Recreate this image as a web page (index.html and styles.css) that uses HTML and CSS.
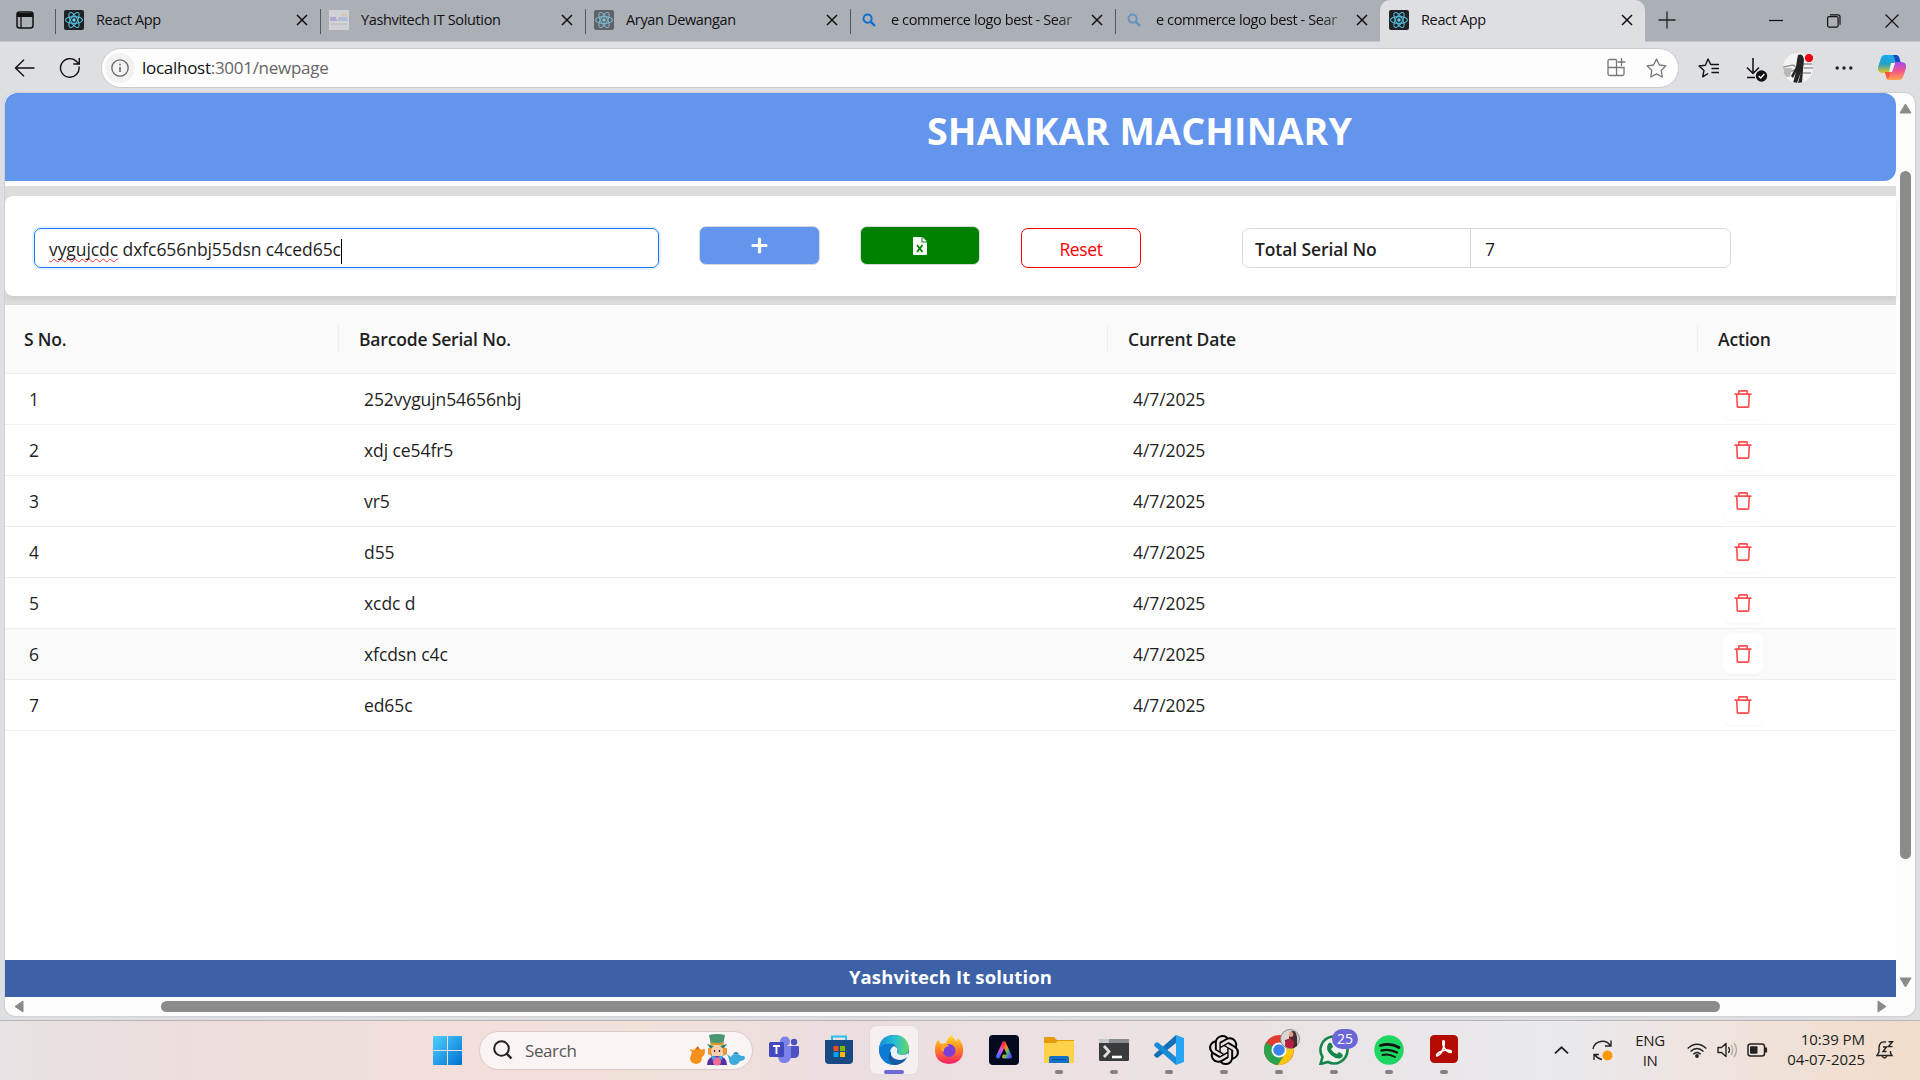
FILE: index.html
```html
<!DOCTYPE html>
<html lang="en">
<head>
<meta charset="utf-8">
<title>React App</title>
<link rel="stylesheet" href="styles.css">
</head>
<body>
<svg class="defs" width="0" height="0">
  <symbol id="react" viewBox="0 0 20 20">
    <rect width="20" height="20" rx="2" fill="#202225"/>
    <g fill="none" stroke="#55bcd8" stroke-width="1.1">
      <ellipse cx="10" cy="10" rx="8.5" ry="3.4"/>
      <ellipse cx="10" cy="10" rx="8.5" ry="3.4" transform="rotate(60 10 10)"/>
      <ellipse cx="10" cy="10" rx="8.5" ry="3.4" transform="rotate(120 10 10)"/>
    </g>
    <circle cx="10" cy="10" r="1.7" fill="#6ad5f0"/>
  </symbol>
  <symbol id="close" viewBox="0 0 12 12"><path d="M1 1 11 11M11 1 1 11" fill="none" stroke="#111" stroke-width="1.5"/></symbol>
  <symbol id="lens" viewBox="0 0 14 14"><circle cx="5.6" cy="5.6" r="4.1" fill="none" stroke="#0f6fd0" stroke-width="2"/><path d="M8.8 8.8 13 13" stroke="#0f6fd0" stroke-width="2.4"/></symbol>
  <symbol id="trash" viewBox="64 64 896 896"><path fill="#ff4d4f" d="M360 184h-8c4.400 0 8-3.600 8-8v8h304v-8c0 4.400 3.600 8 8 8h-8v72h72v-80c0-35.300-28.700-64-64-64H352c-35.300 0-64 28.700-64 64v80h72v-72zm504 72H160c-17.700 0-32 14.300-32 32v32c0 4.400 3.600 8 8 8h60.400l24.700 523c1.600 34.100 29.800 61 63.900 61h454c34.200 0 62.300-26.800 63.900-61l24.700-523H888c4.400 0 8-3.600 8-8v-32c0-17.700-14.300-32-32-32zM731.300 840H292.700l-24.200-512h487l-24.200 512z"/></symbol>
</svg>

<header class="tabbar">
  <div class="tab-actions"><svg width="18" height="18" viewBox="0 0 18 18"><rect x="1" y="1" width="16" height="16" rx="2.500" fill="none" stroke="#111" stroke-width="1.500"/><path d="M1 2h16v4H1z" fill="#111"/><path d="M5 5v12" stroke="#111" stroke-width="1.300"/></svg></div>
  <div class="tab"><svg class="fav"><use href="#react"/></svg><span class="label">React App</span><svg class="x"><use href="#close"/></svg></div>
  <div class="tab"><svg class="fav" viewBox="0 0 20 20"><rect width="20" height="20" fill="#d0d2d5"/><path d="M1 10h7M1 8h6" stroke="#a79bd0" stroke-width="1.500"/><path d="M9 10h10M9 8h9" stroke="#a5b8d8" stroke-width="1.500"/><path d="M13 6l3-2 3 3" stroke="#e4bb82" fill="none"/><path d="M2 14h16" stroke="#b2b5b9"/></svg><span class="label">Yashvitech IT Solution</span><svg class="x"><use href="#close"/></svg></div>
  <div class="tab"><svg class="fav dim"><use href="#react"/></svg><span class="label">Aryan Dewangan</span><svg class="x"><use href="#close"/></svg></div>
  <div class="tab"><svg class="fav lens"><use href="#lens"/></svg><span class="label">e commerce logo best - Sear</span><svg class="x"><use href="#close"/></svg></div>
  <div class="tab"><svg class="fav lens faint"><use href="#lens"/></svg><span class="label">e commerce logo best - Sear</span><svg class="x"><use href="#close"/></svg></div>
  <div class="tab active"><svg class="fav"><use href="#react"/></svg><span class="label">React App</span><svg class="x"><use href="#close"/></svg></div>
  <svg class="newtab" width="18" height="18" viewBox="0 0 18 18"><path d="M9 .5v17M.5 9h17" stroke="#222" stroke-width="1.300"/></svg>
  <div class="winctl">
    <svg width="14" height="14" viewBox="0 0 14 14"><path d="M0 6.500h14" stroke="#111" stroke-width="1.200"/></svg>
    <svg width="14" height="14" viewBox="0 0 14 14"><rect x=".6" y="2.600" width="10.500" height="10.500" rx="1.500" fill="none" stroke="#111" stroke-width="1.200"/><path d="M3 .8h8q2 0 2 2v8" fill="none" stroke="#111" stroke-width="1.200"/></svg>
    <svg width="14" height="14" viewBox="0 0 14 14"><path d="M.5.5l13 13M13.500.5l-13 13" stroke="#111" stroke-width="1.100"/></svg>
  </div>
</header>

<nav class="toolbar">
  <svg class="back" width="21" height="18" viewBox="0 0 21 18"><path d="M20.500 9H1.500M10 .8 1.500 9l8.500 8.200" fill="none" stroke="#111" stroke-width="1.400"/></svg>
  <svg class="reload" width="22" height="22" viewBox="0 0 22 22"><path d="M20 9.500A9.300 9.300 0 1 1 17.600 4.600L20 7M20.300 1v6h-6" fill="none" stroke="#111" stroke-width="1.400"/></svg>
  <div class="address">
    <span class="info"><svg width="18" height="18" viewBox="0 0 18 18"><circle cx="9" cy="9" r="8.200" fill="none" stroke="#666" stroke-width="1.300"/><path d="M9 8v5M9 4.800v1.700" stroke="#666" stroke-width="1.500"/></svg></span>
    <span class="url"><b>localhost</b>:3001/newpage</span>
    <svg class="apps" width="19" height="19" viewBox="0 0 19 19"><path d="M9.500 1.500h-7q-1.500 0-1.500 1.500v13q0 1.500 1.500 1.500h13q1.500 0 1.500-1.500V9.500H1M9.500 1.500V17.500M14.500 0v8M10.700 4h7.600" fill="none" stroke="#777" stroke-width="1.300"/></svg>
    <svg width="21" height="20" viewBox="0 0 21 20"><path d="M10.500 1l2.900 6 6.500.9-4.700 4.600 1.100 6.500-5.800-3.100L4.700 19l1.100-6.500L1.100 7.900 7.600 7z" fill="none" stroke="#777" stroke-width="1.300" stroke-linejoin="round"/></svg>
  </div>
  <div class="tools">
    <svg width="22" height="20" viewBox="0 0 22 20"><path d="M10 15.500 4.700 18.800 6 12.400 1.100 8l6.300-.8L10 1l2.700 5.500H21M13.500 10.500H21M13.500 14.500H21" fill="none" stroke="#111" stroke-width="1.400" stroke-linejoin="round"/></svg>
    <svg class="dl" width="22" height="24" viewBox="0 0 22 24"><path d="M7 0v15M1 9.500l6 6 6-6M1 19.500h8" fill="none" stroke="#111" stroke-width="1.500"/><circle cx="15.500" cy="18" r="5.700" fill="#111"/><path d="M12.700 18l2 2 3.600-4" fill="none" stroke="#fff" stroke-width="1.300"/></svg>
    <svg class="me" width="31" height="30" viewBox="0 0 31 30"><clipPath id="r"><circle cx="15" cy="15" r="15"/></clipPath><g clip-path="url(#r)"><rect width="31" height="30" fill="#f3f3f3"/><path d="M0 14l10-2 5 3-6 3-9 2M20 11h10M21 15h9M20 20h8" stroke="#999" stroke-width="1.500" fill="none"/><path d="M0 15h9l-2 9H2z" fill="#b9b9b9"/><path d="M15 2q5-2 6 5l-1 10-1 13h-4l3-11-4 11h-4l3-11-3 6-2-2 5-9 1-7z" fill="#242424"/></g><circle cx="26" cy="5" r="4.600" fill="#e60012" stroke="#e8e8ea"/></svg>
    <svg class="more" width="18" height="4" viewBox="0 0 18 4"><g fill="#222"><circle cx="2.200" cy="2" r="1.700"/><circle cx="9" cy="2" r="1.700"/><circle cx="15.800" cy="2" r="1.700"/></g></svg>
    <svg class="copilot" width="28" height="27" viewBox="0 0 28 27"><defs><linearGradient id="c1" x2="0" y2="1"><stop stop-color="#16a9f5"/><stop offset=".5" stop-color="#20a3c6"/><stop offset="1" stop-color="#f0c21a"/></linearGradient><linearGradient id="c2" x2="0" y2="1"><stop stop-color="#a44df0"/><stop offset=".5" stop-color="#f2548b"/><stop offset="1" stop-color="#ffa34c"/></linearGradient></defs><path d="M7 1h10q3 0 4 4l1 3h-3q-4 0-5 4l-2 7H4q-5-1-4-6L3 4Q4 1 7 1z" fill="url(#c1)"/><path d="M15 1h3q3 0 4 5l.5 2h-5q-1-5-2.500-7z" fill="#1747c4"/><path d="M21 26H11q-3 0-3-4l-1-3h3q4 0 5-4l2-7h7q5 1 4 6l-3 9q-1 3-4 3z" fill="url(#c2)"/><path d="M8 18h5l-3 7q-2-2-3-7z" fill="#f15a3a"/><path d="M13 9h4l-3 9h-3z" fill="#f2f0f5"/></svg>
  </div>
</nav>

<main class="frame">
  <div class="page">
    <div class="banner"><h1>SHANKAR MACHINARY</h1></div>
    <section class="strip">
      <div class="controls">
        <div class="field"><span class="misspelt">vygujcdc</span> dxfc656nbj55dsn c4ced65c<i class="caret"></i></div>
        <button class="btn add"><svg width="17" height="17" viewBox="0 0 17 17"><path d="M8.500 2v13M2 8.500h13" stroke="#fff" stroke-width="3.200" stroke-linecap="round"/></svg></button>
        <button class="btn excel"><svg width="14" height="18" viewBox="0 0 14 18"><path d="M0 1q0-1 1-1h7.500v5.500H14V17q0 1-1 1H1q-1 0-1-1z" fill="#fff"/><path d="M9.500 0 14 4.500H9.500z" fill="#fff"/><path d="M4 8l5.500 7M9.500 8 4 15" stroke="#008000" stroke-width="1.800"/></svg></button>
        <button class="btn reset">Reset</button>
        <div class="total"><span class="total-label">Total Serial No</span><span class="total-value">7</span></div>
      </div>
    </section>
    <section class="table">
      <div class="row head"><div>S No.</div><div>Barcode Serial No.</div><div>Current Date</div><div>Action</div></div>
      <div class="row"><div>1</div><div>252vygujn54656nbj</div><div>4/7/2025</div><div><span class="del"><svg><use href="#trash"/></svg></span></div></div>
      <div class="row"><div>2</div><div>xdj ce54fr5</div><div>4/7/2025</div><div><span class="del"><svg><use href="#trash"/></svg></span></div></div>
      <div class="row"><div>3</div><div>vr5</div><div>4/7/2025</div><div><span class="del"><svg><use href="#trash"/></svg></span></div></div>
      <div class="row"><div>4</div><div>d55</div><div>4/7/2025</div><div><span class="del"><svg><use href="#trash"/></svg></span></div></div>
      <div class="row"><div>5</div><div>xcdc d</div><div>4/7/2025</div><div><span class="del"><svg><use href="#trash"/></svg></span></div></div>
      <div class="row hover"><div>6</div><div>xfcdsn c4c</div><div>4/7/2025</div><div><span class="del"><svg><use href="#trash"/></svg></span></div></div>
      <div class="row"><div>7</div><div>ed65c</div><div>4/7/2025</div><div><span class="del"><svg><use href="#trash"/></svg></span></div></div>
    </section>
    <footer class="foot"><span>Yashvitech It solution</span></footer>
  </div>
  <div class="vscroll">
    <svg width="13" height="11" viewBox="0 0 13 11"><path d="M6.500 1 12 10H1z" fill="#8b8b8b" stroke="#8b8b8b" stroke-linejoin="round"/></svg>
    <i></i>
    <svg width="13" height="11" viewBox="0 0 13 11"><path d="M6.500 10 12 1H1z" fill="#8b8b8b" stroke="#8b8b8b" stroke-linejoin="round"/></svg>
  </div>
  <div class="hscroll">
    <svg width="10" height="13" viewBox="0 0 10 13"><path d="M1 6.500 9 1v11z" fill="#8b8b8b" stroke="#8b8b8b" stroke-linejoin="round"/></svg>
    <i></i>
    <svg width="10" height="13" viewBox="0 0 10 13"><path d="M9 6.500 1 1v11z" fill="#8b8b8b" stroke="#8b8b8b" stroke-linejoin="round"/></svg>
  </div>
</main>

<footer class="taskbar">
  <svg class="start" width="29" height="29" viewBox="0 0 29 29"><defs><linearGradient id="w" x2="1" y2="1"><stop stop-color="#4fd0ff"/><stop offset="1" stop-color="#0070d0"/></linearGradient></defs><path d="M1 0h13v14H0V1zM15 0h13q1 0 1 1v13H15zM0 15h14v14H1q-1 0-1-1zM15 15h14v13q0 1-1 1H15z" fill="url(#w)"/></svg>
  <div class="search">
    <svg width="20" height="20" viewBox="0 0 20 20"><circle cx="8.500" cy="8.500" r="7.300" fill="none" stroke="#222" stroke-width="2"/><path d="M13.500 13.500 18.500 18.500" stroke="#222" stroke-width="2.400"/></svg>
    <span>Search</span>
    <svg class="hatter" width="57" height="32" viewBox="0 0 57 32"><path d="M3 18l-3-3 4 1q5-3 9 0 3-3 3 1t-3 6q0 7-6 7-6-1-6-6z" fill="#f5921b"/><path d="M6 15l3-3 2 4z" fill="#e66b13"/><path d="M20 1q8-2 16 0l-2 10H22z" fill="#4b9773"/><path d="M21.500 8q6 2 13 0v3h-13z" fill="#d79a2b"/><path d="M18 10q9 4 20 0l-3 4H21z" fill="#377c5a"/><path d="M19 14h4v8l-4-2zM33 14h5v6l-4 2z" fill="#e49737"/><circle cx="28" cy="17" r="6" fill="#f8cfaa"/><path d="M25.500 16v2M30.500 16v2" stroke="#315" stroke-width="1.200"/><path d="M18 31q0-9 10-9t10 9z" fill="#5731a3"/><path d="M22 21l6 3 6-3-1 5-5-2-5 2z" fill="#36a9ea"/><circle cx="28" cy="27.500" r="4" fill="#ef6e9c"/><path d="M38 20l4 3q1-3 5-3 4 0 5 2 4-1 4 2-1 3-5 3-2 4-6 4-5 0-5-6z" fill="#3cabdc"/><path d="M44 20q3-4 6 0z" fill="#2386bd"/></svg>
  </div>
  <div class="apps-row">
    <div class="app"><svg viewBox="0 0 30 30"><circle cx="25" cy="7" r="3.200" fill="#4c50c0"/><path d="M20 11h9q1 0 1 1v6q0 5-5 5h-4z" fill="#4f52c4"/><circle cx="16" cy="6.500" r="5" fill="#7b83eb"/><path d="M9 11h13v11q-1 6-7 6-5 0-6-6z" fill="#7b83eb"/><rect y="7" width="15" height="15" rx="1.500" fill="#434abf"/><path d="M4 11h7M7.500 11v8" stroke="#fff" stroke-width="1.900"/></svg></div>
    <div class="app"><svg viewBox="0 0 30 30"><path d="M8 6V1.500h14V6" fill="none" stroke="#24c0f2" stroke-width="2"/><path d="M1 5h28v20q0 4-4 4H5q-4 0-4-4z" fill="#174a83"/><path d="M9.500 11h5v5h-5z" fill="#f25022"/><path d="M16 11h5v5h-5z" fill="#7fba00"/><path d="M9.500 17h5v5h-5z" fill="#00a4ef"/><path d="M16 17h5v5h-5z" fill="#ffb900"/></svg></div>
    <div class="app on"><svg viewBox="0 0 30 30"><defs><linearGradient id="e" x2="1"><stop stop-color="#168cda"/><stop offset=".55" stop-color="#2bc0d3"/><stop offset="1" stop-color="#65da5a"/></linearGradient></defs><circle cx="15" cy="15" r="15" fill="#1266b4"/><path d="M0 14Q1 0 15 0q13 0 15 13 0 7-8 7-4 0-4-2 2-2 0-5-3-5-9-4-6 1-9 5z" fill="url(#e)"/><path d="M0 15q2-6 9-6 5 0 6 2-5 3-4 9 2 7 8 9Q4 33 0 15z" fill="#0b7bd3"/><path d="M11 18q0-5 4-7 5 2 3 6 0 3 5 3 4 0 6-2l1 3q-4 4-9 4-8 0-10-7z" fill="#e8f1f5"/><path d="M12 16q-1 8 6 9 6 1 10-3-4 8-13 8-9-5-3-14z" fill="#1558a3"/></svg><i class="ind wide"></i></div>
    <div class="app"><svg viewBox="0 0 30 30"><defs><linearGradient id="f" x2="0" y2="1"><stop stop-color="#ffe226"/><stop offset=".5" stop-color="#ff8026"/><stop offset="1" stop-color="#f51b6d"/></linearGradient></defs><path d="M4 5l3 4 5-1q1-5 6-8 1 4 5 6l1-3q6 6 5 14-1 11-14 12Q1 28 1 15q0-6 3-10z" fill="url(#f)"/><circle cx="15" cy="15.500" r="6.500" fill="#7b3fd8"/><path d="M7 10q5-3 8 1-6 1-5 6-5-2-3-7z" fill="#ffa52b"/></svg></div>
    <div class="app"><svg viewBox="0 0 30 30"><defs><linearGradient id="a" x2="1" y2="1"><stop stop-color="#ff3044"/><stop offset=".35" stop-color="#ff8a21"/><stop offset=".6" stop-color="#56c26d"/><stop offset="1" stop-color="#554dfa"/></linearGradient><linearGradient id="a2" x2="0" y2="1"><stop stop-color="#ff3248"/><stop offset=".5" stop-color="#d957e0"/><stop offset="1" stop-color="#3d6bff"/></linearGradient></defs><rect width="30" height="30" rx="4" fill="#03091f"/><path d="M9 21.500 15 8.500" stroke="url(#a2)" stroke-width="4" stroke-linecap="round"/><path d="M15 8.500l6 13h-6" fill="none" stroke="url(#a)" stroke-width="4" stroke-linecap="round" stroke-linejoin="round"/></svg></div>
    <div class="app"><svg viewBox="0 0 30 30"><path d="M0 3q0-1 1-1h9l3 3H30v12H0z" fill="#e19c08"/><path d="M0 8h11l3-2h16v22H0z" fill="#ffd04a"/><path d="M5 28v-5q0-2 2-2h16q2 0 2 2v5z" fill="#1271c8"/><path d="M8 24.500h14" stroke="#0b4c91"/></svg><i class="ind"></i></div>
    <div class="app"><svg viewBox="0 0 30 30"><rect y="4" width="30" height="22" rx="1.500" fill="#3a3b3d"/><path d="M1 4h28q1 0 1 1v3H0V5q0-1 1-1z" fill="#8b8c8e"/><path d="M0 5q0-1 1-1h9v4H0z" fill="#c6c7c8"/><path d="M5 11l5 5.500L5 22" fill="none" stroke="#ddd" stroke-width="2.800"/><path d="M13 22h10" stroke="#fff" stroke-width="2.600"/></svg><i class="ind"></i></div>
    <div class="app"><svg viewBox="0 0 30 30"><path d="M22 0l8 3v24l-8 3z" fill="#28a5f2"/><path d="M22 0v8L4 22.500q-1 .5-2 0L.5 21q-1-1 0-2z" fill="#1071b9"/><path d="M22 30v-8L4 7.500q-1-.5-2 0L.5 9q-1 1 0 2z" fill="#178ad3"/></svg><i class="ind"></i></div>
    <div class="app"><svg viewBox="0 0 24 24"><path fill="#000" d="M22.282 9.821a5.985 5.985 0 0 0-.516-4.910 6.046 6.046 0 0 0-6.510-2.900A6.065 6.065 0 0 0 4.981 4.182a5.985 5.985 0 0 0-3.998 2.900 6.046 6.046 0 0 0 .743 7.097 5.980 5.980 0 0 0 .510 4.911 6.051 6.051 0 0 0 6.515 2.900A5.985 5.985 0 0 0 13.260 24a6.056 6.056 0 0 0 5.772-4.206 5.990 5.990 0 0 0 3.998-2.900 6.056 6.056 0 0 0-.748-7.073zM13.260 22.430a4.476 4.476 0 0 1-2.876-1.040l.141-.081 4.779-2.758a.795.795 0 0 0 .393-.681v-6.737l2.020 1.169a.071.071 0 0 1 .038.052v5.583a4.504 4.504 0 0 1-4.495 4.493zM3.600 18.304a4.471 4.471 0 0 1-.535-3.014l.142.085 4.783 2.759a.771.771 0 0 0 .781 0l5.843-3.369v2.332a.080.080 0 0 1-.033.062L9.740 19.950a4.499 4.499 0 0 1-6.140-1.646zM2.341 7.896a4.485 4.485 0 0 1 2.366-1.973V11.600a.766.766 0 0 0 .388.677l5.815 3.354-2.020 1.169a.076.076 0 0 1-.071 0l-4.830-2.787A4.504 4.504 0 0 1 2.341 7.896zm16.596 3.856l-5.833-3.387L15.119 7.200a.076.076 0 0 1 .071 0l4.830 2.791a4.494 4.494 0 0 1-.676 8.105v-5.678a.790.790 0 0 0-.407-.666zm2.010-3.024l-.142-.085-4.774-2.782a.776.776 0 0 0-.785 0L9.409 9.230V6.897a.066.066 0 0 1 .028-.061l4.830-2.787a4.499 4.499 0 0 1 6.680 4.679zM8.307 12.863l-2.020-1.164a.080.080 0 0 1-.038-.057V6.074a4.499 4.499 0 0 1 7.376-3.454l-.142.081L8.704 5.460a.795.795 0 0 0-.393.681zm1.097-2.365l2.602-1.500 2.607 1.500v2.999l-2.597 1.500-2.607-1.500z"/></svg><i class="ind"></i></div>
    <div class="app"><svg viewBox="0 0 30 30"><circle cx="15" cy="15" r="15" fill="#e13d30"/><path d="M2 7.500A15 15 0 0 0 14 30l7-11.500-6-3.500z" fill="#2ba24c"/><path d="M28 8H15l6 10.500L14 30A15 15 0 0 0 28 8z" fill="#fdc60b"/><circle cx="15" cy="15" r="7.500" fill="#fff"/><circle cx="15" cy="15" r="5.800" fill="#3b83ee"/></svg><svg class="badge pic" viewBox="0 0 20 20"><circle cx="10" cy="10" r="9.500" fill="#ddd5d3" stroke="#888"/><path d="M6 18l-1-7 4-1q0-8 4-8 5 0 4 15l-3 2z" fill="#492a2e"/><circle cx="11" cy="5.500" r="2.400" fill="#dba58f"/><path d="M5 17q0-6 5-8l4 4-1 6q-5 1-8-2z" fill="#b81e43"/></svg><i class="ind"></i></div>
    <div class="app"><svg viewBox="0 0 30 30"><path d="M1.500 29l2-7A13.500 13.500 0 1 1 9 27z" fill="#eef0ec" stroke="#16844b" stroke-width="2.600"/><path d="M9 9q2-3 4 0l1 3-2 2q2 4 6 5l2-2 3 2q2 2-1 4-4 2-10-3T9 9z" fill="#16844b"/></svg><span class="badge count">25</span><i class="ind"></i></div>
    <div class="app"><svg viewBox="0 0 30 30"><circle cx="15" cy="15" r="14.700" fill="#1ed760"/><g fill="none" stroke="#111" stroke-linecap="round"><path d="M6.500 10.500q10-3 18.500 2" stroke-width="2.800"/><path d="M7.500 15.500q8-2 15.500 2" stroke-width="2.300"/><path d="M8.500 20q6-1.500 12.500 2" stroke-width="1.900"/></g></svg><i class="ind"></i></div>
    <div class="app"><svg viewBox="0 0 30 30"><rect x="1" width="28" height="28" rx="4.500" fill="#b30b00"/><path d="M8 21q-2-2 5-5 6-2 9 0 1 3-4 0-5-4-4-10 2-1 1 5-2 8-7 10z" fill="none" stroke="#fff" stroke-width="1.700"/></svg><i class="ind"></i></div>
  </div>
  <div class="tray">
    <svg class="chev" width="15" height="8" viewBox="0 0 15 8"><path d="M1 7.300l6.500-6 6.500 6" fill="none" stroke="#222" stroke-width="1.800"/></svg>
    <svg class="sync" width="21" height="21" viewBox="0 0 21 21"><path d="M1 9A9.500 9.500 0 0 1 18.500 6M19 .5V6h-6M2 20v-5.500h5M3 15q3 4 7 4.500" fill="none" stroke="#222" stroke-width="1.400"/><circle cx="15.500" cy="15.500" r="5" fill="#ff9800"/></svg>
    <div class="lang">ENG<br>IN</div>
    <svg class="wifi" width="20" height="15" viewBox="0 0 20 15"><path d="M.7 5.500q9.300-8.500 18.600 0M3.500 8.500q6.500-6 13 0M6.300 11.300q3.700-3.500 7.400 0" fill="none" stroke="#222" stroke-width="1.400"/><circle cx="10" cy="13" r="1.900" fill="#222"/></svg>
    <svg class="vol" width="21" height="16" viewBox="0 0 21 16"><path d="M1 5.500h3.500L9 1.500v13l-4.500-4H1z" fill="none" stroke="#222" stroke-width="1.400" stroke-linejoin="round"/><path d="M11.500 5q2 3 0 6" fill="none" stroke="#222" stroke-width="1.300"/><path d="M14 3q3.500 5 0 10M17 1q5 7 0 14" fill="none" stroke="#aaa" stroke-width="1.300"/></svg>
    <svg class="bat" width="21" height="14" viewBox="0 0 21 14"><rect x="1" y="1" width="16.500" height="12" rx="2.500" fill="none" stroke="#222" stroke-width="1.500"/><rect x="3" y="3.200" width="7.500" height="7.600" rx="1" fill="#222"/><path d="M19 4.500v5" stroke="#222" stroke-width="2.200"/></svg>
    <div class="clock">10:39 PM<br>04-07-2025</div>
    <svg class="bell" width="18" height="18" viewBox="0 0 18 18"><path d="M10 1Q3 0 3 7v4l-2 3.500h15L14.500 12v-2M6 15q2.500 4 5 0" fill="none" stroke="#222" stroke-width="1.400"/><path d="M7 6h3.500L7 10.500h3.500M12.500.8h4l-4 4.800h4" fill="none" stroke="#222" stroke-width="1.400"/></svg>
  </div>
</footer>
</body>
</html>
```
FILE: styles.css
```css
* { box-sizing: border-box; }
body {
  margin: 0;
  width: 1920px;
  height: 1080px;
  overflow: hidden;
  display: flex;
  flex-direction: column;
  background: #dedfe3;
  color: #1f1f1f;
  font-family: "Open Sans", "Noto Sans", sans-serif;
}
svg { display: block; flex: none; }
.defs { position: absolute; }

/* browser tabs */
.tabbar {
  height: 42px;
  flex: none;
  display: flex;
  background: #abafb6;
  border-bottom: 1px solid #c3c5ca;
}
.tab-actions { width: 55px; padding: 11px 0 0 16px; }
.tab {
  width: 265px;
  height: 41px;
  display: flex;
  align-items: center;
  padding: 0 12px 1px 9px;
  position: relative;
}
.tab::before {
  content: "";
  position: absolute;
  left: 0;
  top: 9px;
  width: 1px;
  height: 25px;
  background: #55585d;
}
.fav { width: 20px; height: 20px; margin-right: 12px; }
.fav.dim { opacity: .55; }
.fav.lens { width: 14px; height: 14px; margin: 0 15px 0 3px; }
.fav.faint { opacity: .45; }
.label {
  flex: 1;
  white-space: nowrap;
  font-size: 14.500px;
  letter-spacing: -.35px;
  padding-bottom: 1px;
  color: #111;
  margin-right: 10px;
}
.lens + .label {
  letter-spacing: -.4px;
  -webkit-mask-image: linear-gradient(90deg, #000 86%, rgba(0, 0, 0, .35));
  mask-image: linear-gradient(90deg, #000 86%, rgba(0, 0, 0, .35));
}
.x { width: 12px; height: 12px; }
.tab.active { height: 42px; background: #dedfe3; border-radius: 10px 10px 0 0; padding-bottom: 2px; }
.tab.active::before { display: none; }
.newtab { margin: 11px 0 0 13px; }
.winctl { margin-left: auto; display: flex; gap: 44px; padding: 14px 21px 0 0; }

/* address row */
.toolbar { height: 51px; flex: none; display: flex; align-items: center; padding: 0 14px 0 14px; }
.reload { margin-left: 24px; }
.address {
  margin-left: 20px;
  width: 1578px;
  height: 40px;
  border: 1px solid #cbccd0;
  border-radius: 20px;
  background: #fdfdfd;
  display: flex;
  align-items: center;
  padding: 0 11px 0 3px;
}
.info { width: 30px; height: 30px; border-radius: 15px; background: #f2f2f2; display: grid; place-items: center; }
.url { flex: 1; margin-left: 7px; font-size: 17px; letter-spacing: -.28px; color: #666; }
.url b { font-weight: 400; color: #111; }
.apps { margin-right: 20px; }
.tools { display: flex; align-items: center; margin-left: auto; }
.dl { margin: 4px 0 0 26px; }
.me { margin-left: 15px; }
.more { margin-left: 21px; }
.copilot { margin-left: 25px; }

/* page viewport */
.frame {
  margin: 0 5px 4px;
  width: 1910px;
  height: 923px;
  flex: none;
  display: grid;
  grid-template-columns: 1891px 19px;
  grid-template-rows: 904px 19px;
  background: #fcfcfc;
  border-radius: 10px;
  overflow: hidden;
  box-shadow: 0 0 0 1px #cfd0d4;
}
.page { display: flex; flex-direction: column; background: #fff; font-size: 17.500px; }
.banner {
  height: 88px;
  background: #6495ed;
  border-radius: 12px 12px 12px 0;
  padding: 12px 0 0 378px;
}
h1 { margin: 0; text-align: center; color: #fff; font-size: 37.500px; line-height: 51px; font-weight: 700; letter-spacing: .2px; }
.strip { margin-top: 5px; padding: 10px 0 9px; background: #ddd; }
.controls {
  height: 100px;
  background: #fff;
  border-radius: 8px 0 0 8px;
  box-shadow: 0 3px 5px rgba(0, 0, 0, .07);
  display: flex;
  align-items: flex-start;
  padding: 32px 0 0 29px;
}
.field {
  width: 625px;
  height: 40px;
  border: 1px solid #1677ff;
  border-radius: 7px;
  box-shadow: 0 0 0 2px #e6f3ff;
  padding: 0 14px;
  line-height: 40px;
  letter-spacing: -.07px;
  white-space: nowrap;
}
.misspelt { text-decoration: underline wavy #f33 1px; text-underline-offset: 2px; text-decoration-skip-ink: none; }
.caret { display: inline-block; width: 1px; height: 25px; background: #000; vertical-align: middle; }
.btn {
  height: 39px;
  border: 1px solid #d9d9d9;
  border-radius: 7px;
  padding: 0;
  display: grid;
  place-items: center;
  font: inherit;
}
.add { width: 121px; margin: -2px 0 0 40px; background: #6495ed; }
.excel { width: 120px; margin: -2px 0 0 40px; background: #008000; }
.reset { width: 120px; height: 40px; margin-left: 41px; background: #fff; border-color: red; color: red; letter-spacing: -.4px; padding-top: 1px; }
.total {
  width: 489px;
  height: 40px;
  margin-left: 101px;
  border: 1px solid #d9d9d9;
  border-radius: 7px;
  display: flex;
  line-height: 40px;
  font-weight: 600;
}
.total-label { width: 228px; padding-left: 12px; border-right: 1px solid #d9d9d9; letter-spacing: -.1px; }
.total-value { padding-left: 14px; font-weight: 400; }

/* table */
.table { flex: 1; }
.row {
  height: 51px;
  display: grid;
  grid-template-columns: 333px 769px 590px 199px;
  align-items: center;
  border-bottom: 1px solid #eee;
  letter-spacing: -.08px;
}
.row > div { padding-left: 24px; }
.row > div + div { padding-left: 26px; }
.row.head { height: 69px; background: #fafafa; font-weight: 600; letter-spacing: -.18px; }
.row.head > div { height: 28px; line-height: 29px; padding-left: 19px; white-space: nowrap; }
.row.head > div + div { border-left: 1px solid #eee; padding-left: 20px; }
.row.hover { background: #fafafa; }
.del { width: 40px; height: 40px; border-radius: 8px; background: #fff; box-shadow: 0 2px 0 rgba(0, 0, 0, .02); display: grid; place-items: center; }
.del svg { width: 20px; height: 20px; }
.foot {
  height: 37px;
  display: grid;
  place-items: center;
  padding-bottom: 4px;
  background: #3c61a6;
  color: #fff;
  font-size: 18.500px;
  letter-spacing: .13px;
  font-weight: 700;
}

/* scrollbars */
.vscroll { display: flex; flex-direction: column; align-items: center; padding: 10px 3px 9px; }
.vscroll i { width: 11px; height: 688px; margin: 57px 0 auto; border-radius: 6px; background: #8b8b8b; }
.hscroll { display: flex; align-items: center; padding: 0 9px; height: 19px; }
.hscroll i { width: 1559px; height: 11px; margin: 0 auto 0 137px; border-radius: 6px; background: #8b8b8b; }

/* taskbar */
.taskbar {
  height: 60px;
  flex: none;
  border-top: 1px solid #b9b5b7;
  display: flex;
  align-items: center;
  padding: 0 26px 1px 433px;
  background: linear-gradient(90deg, #e7e2e3 0, #ecdedd 180px, #f2dfda 520px, #f0e1d9 640px, #ecdee0 850px, #ebe3e3 1250px, #e9e9ee 1550px, #efe4df 1700px, #f1ddcc 1900px);
}
.search {
  margin-left: 17px;
  width: 274px;
  height: 39px;
  border-radius: 20px;
  border: 1px solid #d9cbc8;
  background: #faf5f4;
  display: flex;
  align-items: center;
  padding: 0 6px 0 13px;
}
.search span { flex: 1; margin-left: 12px; font-size: 17px; letter-spacing: -.4px; color: #555; }
.apps-row { display: flex; margin-left: 7px; gap: 7px; }
.app { width: 48px; height: 48px; border-radius: 6px; position: relative; display: grid; place-items: center; }
.app > svg { width: 30px; height: 30px; }
.app.on { background: #f6f0f0; box-shadow: 0 0 1px #bbb; }
.ind { position: absolute; bottom: 0; left: 20px; width: 8px; height: 4px; border-radius: 2px; background: #858181; }
.ind.wide { left: 14px; width: 20px; background: #6f68d6; }
.app .badge { position: absolute; top: 3px; }
.app .pic { left: 25px; width: 20px; height: 20px; }
.count { left: 22px; width: 26px; height: 20px; border-radius: 10px; background: #6b66d8; color: #fff; font-size: 14px; line-height: 20px; text-align: center; }
.tray { margin-left: auto; display: flex; align-items: center; font-size: 15px; line-height: 20px; color: #222; letter-spacing: -.4px; }
.sync { margin-left: 23px; }
.lang { margin-left: 22px; width: 30px; text-align: center; margin-top: -1px; }
.wifi { margin-left: 22px; }
.vol { margin-left: 10px; }
.bat { margin-left: 9px; }
.clock { margin: -2px 0 0 13px; width: 84px; text-align: right; white-space: nowrap; letter-spacing: -.05px; }
.bell { margin-left: 11px; }
```
